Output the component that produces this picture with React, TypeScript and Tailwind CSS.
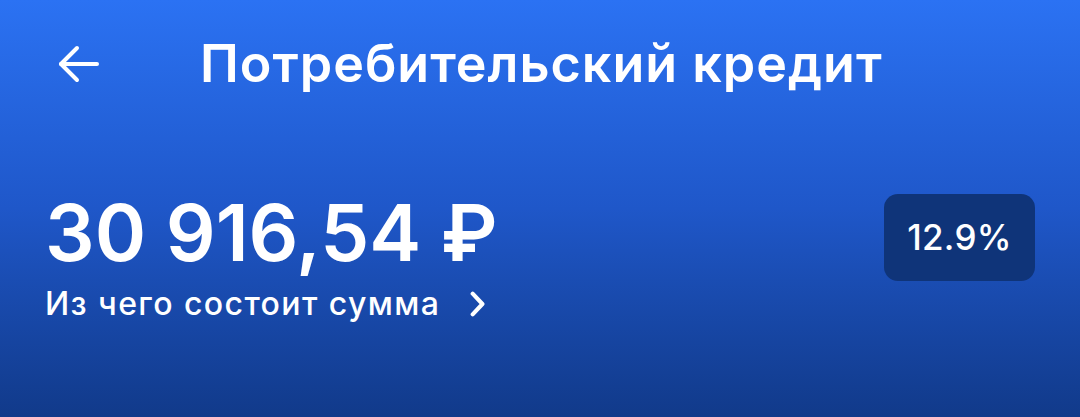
import React from 'react';

export default function App() {
  return (
    <div
      className="w-[1080px] h-[417px] overflow-hidden text-white bg-gradient-to-b from-[#2b72f3] via-[#1f57c9] to-[#113a8a]"
      style={{ fontFamily: 'Inter, "Noto Sans", sans-serif' }}
    >
      {/* Header */}
      <div className="flex items-center h-[128px] pl-[52px]">
        <button className="w-[52px] h-[52px] flex items-center justify-center">
          <svg width="48" height="48" viewBox="0 0 48 48" fill="none" stroke="white" strokeWidth="4" strokeLinecap="round" strokeLinejoin="round">
            <path d="M43 24H7" />
            <path d="M23 8L7 24L23 40" />
          </svg>
        </button>
        <h1 className="ml-[96px] text-[52px] font-semibold tracking-[1px] leading-none">
          Потребительский кредит
        </h1>
      </div>

      {/* Amount */}
      <div className="flex items-start justify-between pl-[45px] pr-[45px] pt-[66px]">
        <div>
          <div className="text-[78px] font-semibold leading-none">30 916,54 ₽</div>
          <button className="flex items-center gap-[24px] mt-[8px] text-[32px] font-medium tracking-[1.4px]">
            Из чего состоит сумма
            <svg width="26" height="26" viewBox="0 0 24 24" fill="none" stroke="white" strokeWidth="3.8" strokeLinecap="round" strokeLinejoin="round">
              <path d="M8 2.5l9 9.5-9 9.5" />
            </svg>
          </button>
        </div>
        <div className="w-[151px] h-[87px] rounded-[14px] bg-[#0f3479] flex items-center justify-center text-[35px] font-[450] tracking-[0.3px]">
          12.9%
        </div>
      </div>
    </div>
  );
}
